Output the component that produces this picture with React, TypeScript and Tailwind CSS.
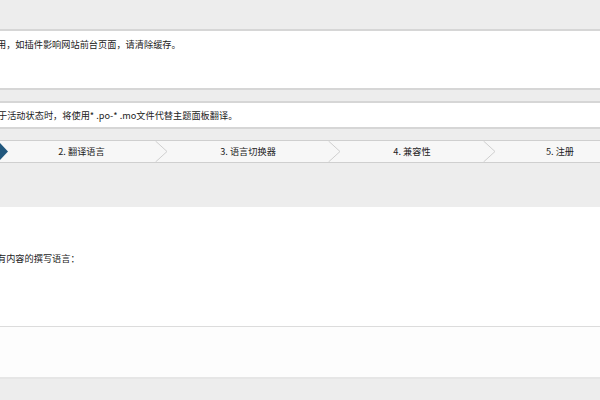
import React from "react";

const font = { fontFamily: '"Noto Sans CJK SC", "Noto Sans", sans-serif' };

function Chevron() {
  return (
    <svg width="13" height="21" viewBox="0 0 13 21" className="shrink-0 block">
      <polyline points="0.5,0 12,10.5 0.5,21" fill="none" stroke="#cfcfcf" strokeWidth="1" />
    </svg>
  );
}

export default function App() {
  return (
    <div
      className="w-[600px] h-[400px] overflow-hidden bg-[#ededed] text-[#222] flex flex-col"
      style={font}
    >
      <div className="h-[29px] shrink-0" />
      <div className="h-[61px] shrink-0 bg-white border-y-2 border-[#d6d6d6] pt-[7px]">
        <p className="text-[9.2px] leading-[13px] -ml-[3px] whitespace-nowrap">
          用，如插件影响网站前台页面，请清除缓存。
        </p>
      </div>
      <div className="h-[11px] shrink-0" />
      <div className="h-[28px] shrink-0 bg-white border-y-2 border-[#d6d6d6] flex items-center">
        <p className="text-[9.2px] leading-[13px] -ml-[2px] whitespace-nowrap">
          于活动状态时，将使用* .po-* .mo文件代替主题面板翻译。
        </p>
      </div>
      <div className="h-[11px] shrink-0" />
      <div className="h-[23px] shrink-0 bg-[#f7f7f7] border-y border-[#cfcfcf] flex text-[9.2px] whitespace-nowrap">
        <svg width="8" height="21" viewBox="0 0 8 21" className="shrink-0 block">
          <polygon points="0,2 8,10.5 0,19" fill="#21577d" />
        </svg>
        <div className="w-[147px] shrink-0 flex items-center justify-center">2. 翻译语言</div>
        <Chevron />
        <div className="w-[160px] shrink-0 flex items-center justify-center">3. 语言切换器</div>
        <Chevron />
        <div className="w-[142px] shrink-0 flex items-center justify-center">4. 兼容性</div>
        <Chevron />
        <div className="w-[128px] shrink-0 flex items-center justify-center">5. 注册</div>
      </div>
      <div className="h-[44px] shrink-0" />
      <div className="h-[120px] shrink-0 bg-white border-b border-[#dcdcdc] pt-[45px]">
        <p className="text-[9.2px] leading-[13px] -ml-[3px] whitespace-nowrap">有内容的撰写语言：</p>
      </div>
      <div className="h-[52px] shrink-0 bg-[#fdfdfd] border-b-2 border-[#e6e6e6]" />
      <div className="flex-1" />
    </div>
  );
}
